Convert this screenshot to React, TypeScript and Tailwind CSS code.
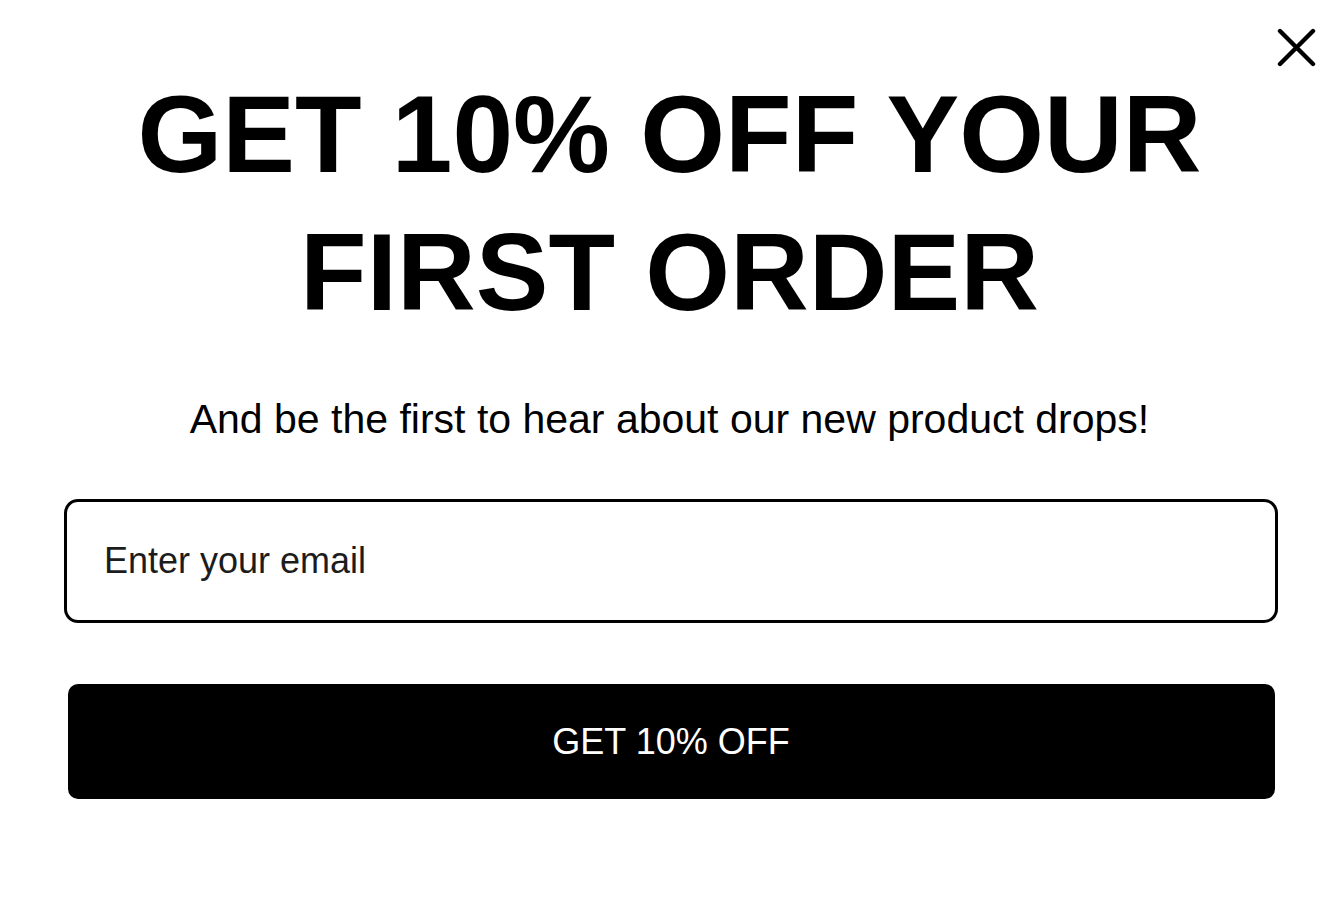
import { useState } from "react";

// Popup newsletter: headline besar, subjudul, input email & tombol hitam.
export default function App() {
  const [email, setEmail] = useState("");

  return (
    <div className="relative min-h-[910px] w-full bg-white font-['Liberation_Sans',Arial,sans-serif] text-black">
      {/* Tombol tutup */}
      <button
        type="button"
        aria-label="Close"
        className="absolute right-[23px] top-[28px] flex h-[39px] w-[39px] items-center justify-center"
      >
        <svg width="39" height="39" viewBox="0 0 39 39" fill="none">
          <path d="M3 3 36 36M36 3 3 36" stroke="#000" strokeWidth="4.4" strokeLinecap="round" />
        </svg>
      </button>

      <div className="flex flex-col items-center pt-[65px]">
        <h1 className="text-center text-[109px] font-bold leading-[138px]">
          GET 10% OFF YOUR
          <br />
          FIRST ORDER
        </h1>

        <p className="mt-[55px] text-center text-[41px] leading-[46px] text-black">
          And be the first to hear about our new product drops!
        </p>

        <form
          className="mt-[57px] flex flex-col items-center pl-[3px]"
          onSubmit={(e) => e.preventDefault()}
        >
          <input
            type="email"
            value={email}
            onChange={(e) => setEmail(e.target.value)}
            placeholder="Enter your email"
            className="h-[124px] w-[1214px] rounded-[14px] border-[3px] border-black bg-white px-[37px] font-['Liberation_Sans',Arial,sans-serif] text-[36px] text-[#1c1c1c] outline-none placeholder:text-[#1c1c1c]"
          />
          <button
            type="submit"
            className="mt-[61px] h-[115px] w-[1207px] rounded-[10px] bg-black text-[36px] text-white"
          >
            GET 10% OFF
          </button>
        </form>
      </div>
    </div>
  );
}
